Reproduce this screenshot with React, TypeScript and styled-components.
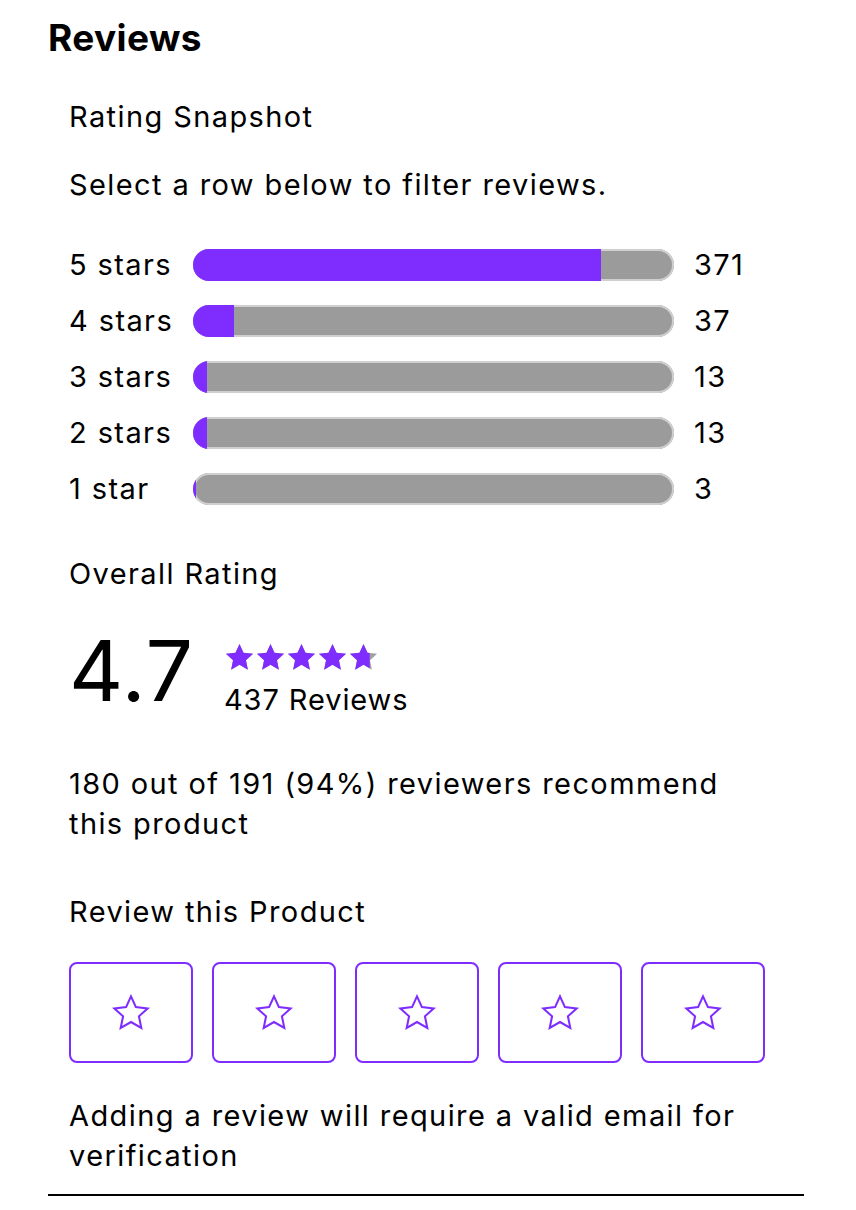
import React from "react";
import styled, { createGlobalStyle } from "styled-components";

const Global = createGlobalStyle`
  body { margin: 0; background: #fff; color: #000; font-family: Inter, "Liberation Sans", sans-serif; }
`;

const PURPLE = "#7f2cff";

const Section = styled.section`
  width: 756px;
  margin-left: 48px;
  padding-top: 14px;
  border-bottom: 2px solid #000;
  padding-bottom: 18px;
`;

const Title = styled.h2`
  margin: 0;
  font-size: 37px;
  line-height: 48px;
  font-weight: 700;
  letter-spacing: 0.4px;
`;

const Body = styled.div`
  padding: 0 36px 0 21px;
  display: flex;
  flex-direction: column;
`;

const Text = styled.p<{ $mt?: number }>`
  margin: ${(p) => p.$mt ?? 0}px 0 0;
  font-size: 29px;
  line-height: 40px;
  font-weight: 400;
  letter-spacing: 1.4px;
`;

const Rows = styled.div`
  margin-top: 42px;
  display: flex;
  flex-direction: column;
  gap: 24px;
`;

const Row = styled.div`
  display: grid;
  grid-template-columns: 104px 481px auto;
  column-gap: 20px;
  align-items: center;
  height: 32px;
  font-size: 29px;
  letter-spacing: 1.4px;
  white-space: nowrap;
`;

const Track = styled.div`
  height: 32px;
  border-radius: 16px;
  background: #9b9b9b;
  box-shadow: inset 0 0 0 2px #cfcfcf;
  overflow: hidden;
  display: flex;
`;

const Fill = styled.div`
  height: 100%;
  background: ${PURPLE};
`;

const Overall = styled.div`
  margin-top: 27px;
  display: flex;
  align-items: flex-start;
  gap: 30px;
`;

const Big = styled.div`
  font-size: 84px;
  line-height: 100px;
  font-weight: 400;
  letter-spacing: 1px;
`;

const Meta = styled.div`
  display: flex;
  flex-direction: column;
  gap: 9px;
  margin-top: 21px;
`;

const StarsRow = styled.div`
  display: flex;
  gap: 0;
  height: 31px;
  align-items: center;
`;

const Count = styled.div`
  font-size: 29px;
  line-height: 36px;
  letter-spacing: 0.9px;
`;

const Boxes = styled.div`
  margin-top: 30px;
  display: flex;
  gap: 19px;
`;

const Box = styled.button`
  flex: 0 0 124px;
  height: 101px;
  border: 2px solid ${PURPLE};
  border-radius: 8px;
  background: #fff;
  display: flex;
  align-items: center;
  justify-content: center;
  padding: 0;
  cursor: pointer;
`;

const STAR = "M12 1.5 L15.1 8.3 L22.5 9.1 L17 14.1 L18.5 21.4 L12 17.7 L5.5 21.4 L7 14.1 L1.5 9.1 L8.9 8.3 Z";

const SolidStar = ({ frac }: { frac: number }) => {
  const id = `clip${Math.round(frac * 100)}`;
  return (
    <svg width="31" height="31" viewBox="0 0 24 24">
      <defs>
        <clipPath id={id}>
          <rect x="0" y="0" width={24 * frac} height="24" />
        </clipPath>
      </defs>
      <path d={STAR} fill="#a0a0a0" />
      <path d={STAR} fill={PURPLE} clipPath={`url(#${id})`} />
    </svg>
  );
};

const OutlineStar = () => (
  <svg width="38" height="38" viewBox="0 0 24 24">
    <path d={STAR} fill="none" stroke={PURPLE} strokeWidth="1.3" strokeLinejoin="miter" />
  </svg>
);

const data = [
  { label: "5 stars", count: 371 },
  { label: "4 stars", count: 37 },
  { label: "3 stars", count: 13 },
  { label: "2 stars", count: 13 },
  { label: "1 star", count: 3 },
];
const total = 437;

export default function App() {
  return (
    <>
      <Global />
      <Section>
        <Title>Reviews</Title>
        <Body>
          <Text $mt={35}>Rating Snapshot</Text>
          <Text $mt={28}>Select a row below to filter reviews.</Text>
          <Rows>
            {data.map((d) => (
              <Row key={d.label}>
                <span>{d.label}</span>
                <Track>
                  <Fill style={{ width: `${(d.count / total) * 100}%` }} />
                </Track>
                <span>{d.count}</span>
              </Row>
            ))}
          </Rows>
          <Text $mt={51}>Overall Rating</Text>
          <Overall>
            <Big>4.7</Big>
            <Meta>
              <StarsRow>
                {[1, 1, 1, 1, 0.7].map((f, i) => (
                  <SolidStar key={i} frac={f} />
                ))}
              </StarsRow>
              <Count>437 Reviews</Count>
            </Meta>
          </Overall>
          <Text $mt={43}>180 out of 191 (94%) reviewers recommend this product</Text>
          <Text $mt={48}>Review this Product</Text>
          <Boxes>
            {[1, 2, 3, 4, 5].map((n) => (
              <Box key={n} aria-label={`${n} star`}>
                <OutlineStar />
              </Box>
            ))}
          </Boxes>
          <Text $mt={33}>Adding a review will require a valid email for verification</Text>
        </Body>
      </Section>
    </>
  );
}
